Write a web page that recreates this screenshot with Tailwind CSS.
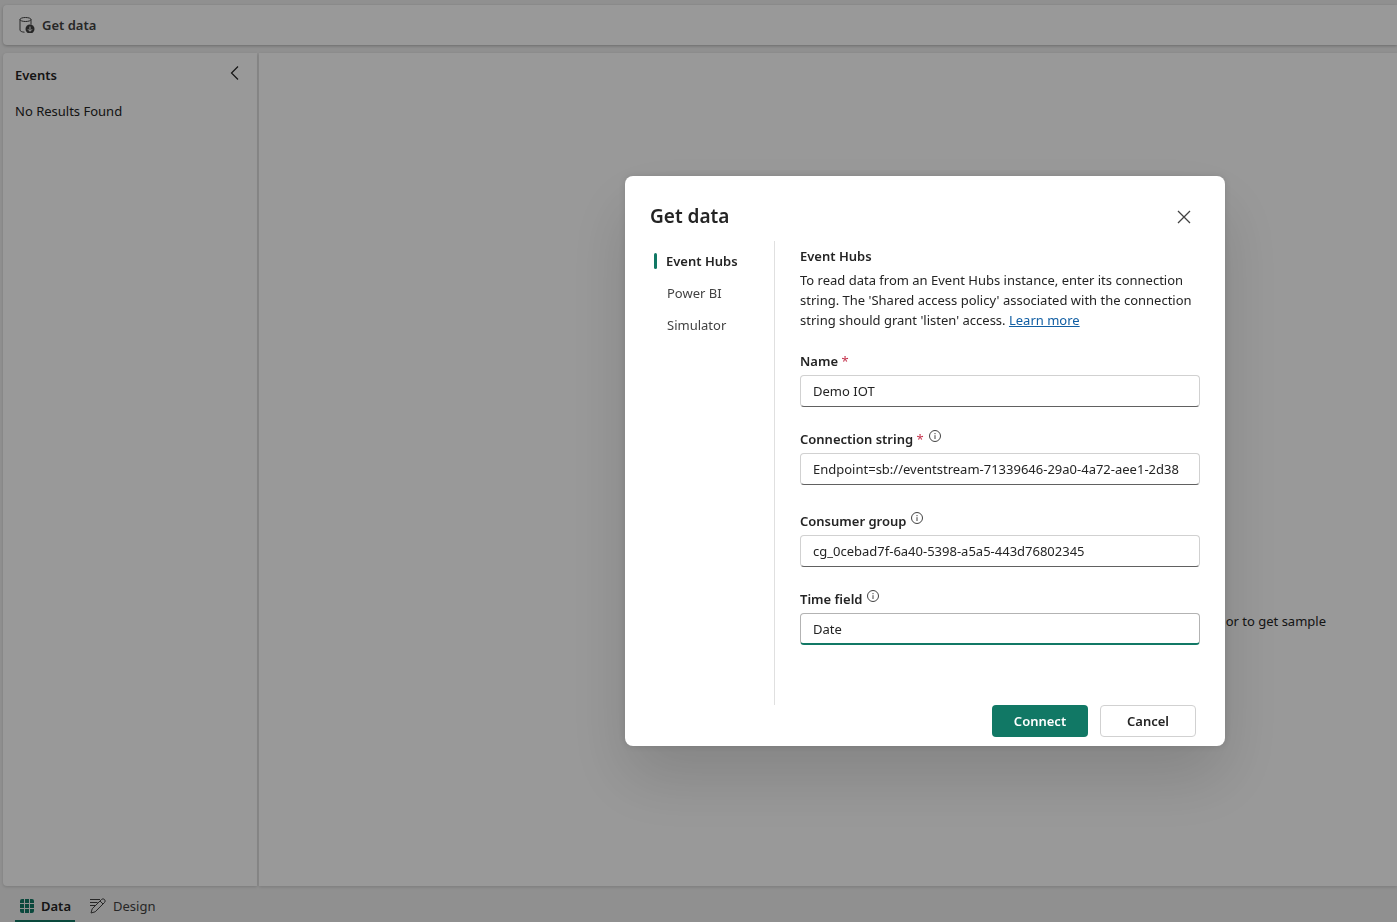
<!DOCTYPE html>
<html lang="en">
<head>
<meta charset="utf-8">
<meta name="viewport" content="width=device-width, initial-scale=1">
<title>Get data</title>
<script src="https://cdn.jsdelivr.net/npm/@tailwindcss/browser@4"></script>
</head>
<body class="h-screen overflow-hidden bg-[#f0f0f0] font-['Noto_Sans','Open_Sans',sans-serif] text-[13px] leading-5 text-[#242424]">

<div class="flex h-full flex-col pl-[3px] pt-[5px]">
  <header class="flex h-10 shrink-0 items-center rounded-l-sm bg-white px-4 shadow-[0_1px_3px_rgba(0,0,0,0.25)]">
    <button type="button" class="flex items-center gap-[7px] font-semibold text-[#424242]">
      <svg class="size-4" viewBox="0 0 16 16" fill="none" stroke="#424242" aria-hidden="true">
        <ellipse cx="6.500" cy="2.500" rx="5.500" ry="2"/>
        <path d="M1 2.500v10.500c0 1.200 1.800 2 4.500 2.200M12 2.500v5"/>
        <circle cx="11" cy="12" r="4.500" fill="#424242" stroke="none"/>
        <path d="M11 9.500v4.500M9 12.300l2 2 2-2" stroke="#fff"/>
      </svg>
      Get data
    </button>
  </header>

  <div class="mt-2 flex min-h-0 grow gap-[2px]">
    <aside class="w-[254px] shrink-0 rounded-l-sm bg-white px-3 pt-3 shadow-[0_1px_3px_rgba(0,0,0,0.15)]">
      <div class="flex items-start justify-between">
        <h2 class="font-semibold">Events</h2>
        <button type="button" aria-label="Collapse events" class="mr-[6px]">
          <svg class="h-4 w-[10px]" viewBox="0 0 10 16" fill="none" stroke="#242424" stroke-width="1.200" aria-hidden="true"><path d="M9 1.500 2.500 8 9 14.500"/></svg>
        </button>
      </div>
      <p class="mt-4">No Results Found</p>
    </aside>
    <main class="flex grow items-start justify-end bg-white pr-[71px] pt-[558px] shadow-[0_1px_3px_rgba(0,0,0,0.15)]">
      <p>or to get sample</p>
    </main>
  </div>

  <nav aria-label="Views" class="flex h-9 shrink-0 gap-[7px] pl-3">
    <a href="#data" aria-current="page" class="flex items-center gap-[6px] border-b-2 border-[#117865] px-1 pt-[6px] font-semibold">
      <svg class="size-4" viewBox="0 0 16 16" fill="#117865" aria-hidden="true">
        <path d="M1 5V3a2 2 0 0 1 2-2h2v4zM6 1h4v4H6zM11 1h2a2 2 0 0 1 2 2v2h-4zM1 6h4v4H1zM6 6h4v4H6zM11 6h4v4h-4zM1 11h4v4H3a2 2 0 0 1-2-2zM6 11h4v4H6zM11 11h4v2a2 2 0 0 1-2 2h-2z"/>
      </svg>
      Data
    </a>
    <a href="#design" class="flex items-center gap-[7px] border-b-2 border-transparent px-2 pt-[6px] text-[#424242]">
      <svg class="size-4" viewBox="0 0 16 16" fill="none" stroke="#424242" aria-hidden="true">
        <path d="M0 1.500h10M0 4.500h7.500M0 7.500h5M1 15l1.200-4.200 9.300-9.300a2 2 0 0 1 3 3L5.200 13.800zM10 3l3 3"/>
      </svg>
      Design
    </a>
  </nav>
</div>

<div class="fixed inset-0 z-10 flex items-center justify-end bg-black/40 pr-[172px]">
  <div role="dialog" aria-modal="true" aria-labelledby="dialog-title" class="w-[600px] rounded-lg bg-white pb-[9px] pt-6 shadow-[0_0_8px_rgba(0,0,0,0.12),0_32px_64px_rgba(0,0,0,0.14)]">
    <div class="flex items-start justify-between pl-[25px] pr-[33px]">
      <h1 id="dialog-title" class="text-[19px] font-semibold leading-8">Get data</h1>
      <button type="button" aria-label="Close" class="mt-[9px]">
        <svg class="size-4" viewBox="0 0 16 16" fill="none" stroke="#424242" stroke-width="1.300" aria-hidden="true"><path d="m2 2 12 12M14 2 2 14"/></svg>
      </button>
    </div>

    <div class="mt-[9px] flex">
      <div role="tablist" aria-label="Source" aria-orientation="vertical" class="flex w-[150px] shrink-0 flex-col items-start gap-3 border-r border-[#e0e0e0] pl-[29px] pt-[10px]">
        <button type="button" role="tab" aria-selected="true" class="flex items-center gap-[9px] font-semibold"><span class="h-4 w-[3px] rounded-full bg-[#117865]"></span>Event Hubs</button>
        <button type="button" role="tab" aria-selected="false" class="pl-[13px] text-[#424242]">Power BI</button>
        <button type="button" role="tab" aria-selected="false" class="pl-[13px] text-[#424242]">Simulator</button>
      </div>

      <form id="source" class="grow px-[25px] pb-[60px] pt-[5px]">
        <h2 class="font-semibold">Event Hubs</h2>
        <p class="mt-1 whitespace-nowrap">To read data from an Event Hubs instance, enter its connection<br>string. The 'Shared access policy' associated with the connection<br>string should grant 'listen' access. <a href="#learn" class="text-[#115ea3] underline">Learn more</a></p>

        <label for="name" class="mt-[21px] block font-semibold">Name <span class="font-normal text-[#c4314b]">*</span></label>
        <input id="name" type="text" value="Demo IOT" class="mt-1 block h-8 w-full rounded-sm border border-[#d1d1d1] border-b-[#616161] px-3 outline-none">

        <div class="mt-[22px] flex items-start gap-[5px]">
          <label for="conn" class="font-semibold">Connection string <span class="font-normal text-[#c4314b]">*</span></label>
          <svg class="mt-px size-3" viewBox="0 0 12 12" fill="none" stroke="#424242" aria-hidden="true"><circle cx="6" cy="6" r="5.500"/><path d="M6 5.200V9M6 3v1.200"/></svg>
        </div>
        <input id="conn" type="text" value="Endpoint=sb://eventstream-71339646-29a0-4a72-aee1-2d38" class="mt-1 block h-8 w-full rounded-sm border border-[#d1d1d1] border-b-[#616161] px-3 outline-none">

        <div class="mt-[26px] flex items-start gap-[5px]">
          <label for="group" class="font-semibold">Consumer group</label>
          <svg class="mt-px size-3" viewBox="0 0 12 12" fill="none" stroke="#424242" aria-hidden="true"><circle cx="6" cy="6" r="5.500"/><path d="M6 5.200V9M6 3v1.200"/></svg>
        </div>
        <input id="group" type="text" value="cg_0cebad7f-6a40-5398-a5a5-443d76802345" class="mt-1 block h-8 w-full rounded-sm border border-[#d1d1d1] border-b-[#616161] px-3 outline-none">

        <div class="mt-[22px] flex items-start gap-[5px]">
          <label for="time" class="font-semibold">Time field</label>
          <svg class="mt-px size-3" viewBox="0 0 12 12" fill="none" stroke="#424242" aria-hidden="true"><circle cx="6" cy="6" r="5.500"/><path d="M6 5.200V9M6 3v1.200"/></svg>
        </div>
        <input id="time" type="text" value="Date" class="mt-1 block h-8 w-full rounded-sm border border-b-2 border-[#b3b3b3] border-b-[#117865] px-3 outline-none">
      </form>
    </div>

    <div class="flex justify-end gap-3 pr-[29px]">
      <button type="submit" form="source" class="h-8 w-24 rounded-sm bg-[#117865] font-semibold text-white">Connect</button>
      <button type="button" class="h-8 w-24 rounded-sm border border-[#d1d1d1] font-semibold">Cancel</button>
    </div>
  </div>
</div>
</body>
</html>
